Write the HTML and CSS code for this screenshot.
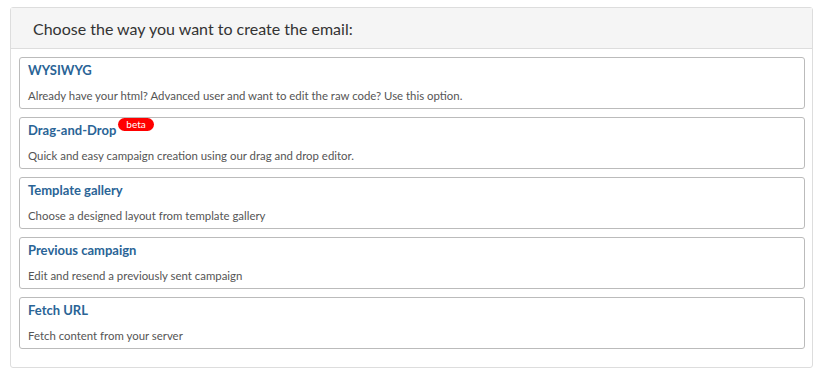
FILE: index.html
```html
<!DOCTYPE html>
<html>
  <head>
    <title>Create email</title>
    <meta name="viewport" content="width=device-width, initial-scale=1">
    <link rel="stylesheet" href="styles.css">
  </head>
  <body>
  <div class="panel">
    <div class="panel-heading">
      <h3>Choose the way you want to create the email:</h3>
    </div>
    <div class="panel-body">
      <a class="option" href="#">
        <h4>WYSIWYG</h4>
        <p>Already have your html? Advanced user and want to edit the raw code? Use this option.</p>
      </a>
      <a class="option" href="#">
        <h4>Drag-and-Drop <span class="badge">beta</span></h4>
        <p>Quick and easy campaign creation using our drag and drop editor.</p>
      </a>
      <a class="option" href="#">
        <h4>Template gallery</h4>
        <p>Choose a designed layout from template gallery</p>
      </a>
      <a class="option" href="#">
        <h4>Previous campaign</h4>
        <p>Edit and resend a previously sent campaign</p>
      </a>
      <a class="option" href="#">
        <h4>Fetch URL</h4>
        <p>Fetch content from your server</p>
      </a>
    </div>
  </div>
  </body>
</html>
```

FILE: styles.css
```css
* {
  box-sizing: border-box;
  margin: 0;
  padding: 0;
}
body {
  font-family: Lato, "Open Sans", sans-serif;
  background-color: white;
  color: #333;
  padding: 7px 7px 0 10px;
}
.panel {
  width: 803px;
  border: 1px solid #ddd;
  border-radius: 3px;
}
.panel-heading {
  background-color: #f5f5f5;
  border-bottom: 1px solid #ddd;
  height: 41px;
  padding: 0 22px;
  display: flex;
  align-items: center;
}
.panel-heading h3 {
  font-size: 16px;
  font-weight: normal;
  color: #333;
}
.panel-body {
  padding: 8px 7px 10px 8px;
}
.option {
  display: block;
  height: 52px;
  margin-bottom: 8px;
  border: 1px solid #bbb;
  border-radius: 3px;
  padding: 3px 8px 0 8px;
  text-decoration: none;
}
.option h4 {
  font-size: 13px;
  font-weight: bold;
  color: #2a6496;
  line-height: 18px;
  position: relative;
}
.option p {
  font-size: 11.4px;
  color: #555;
  margin-top: 10px;
  line-height: 14px;
}
.badge {
  position: absolute;
  top: -3px;
  margin-left: 2px;
  background-color: #f00;
  color: white;
  font-size: 10px;
  font-weight: normal;
  line-height: 13px;
  padding: 0 8px;
  border-radius: 7px;
}
```
